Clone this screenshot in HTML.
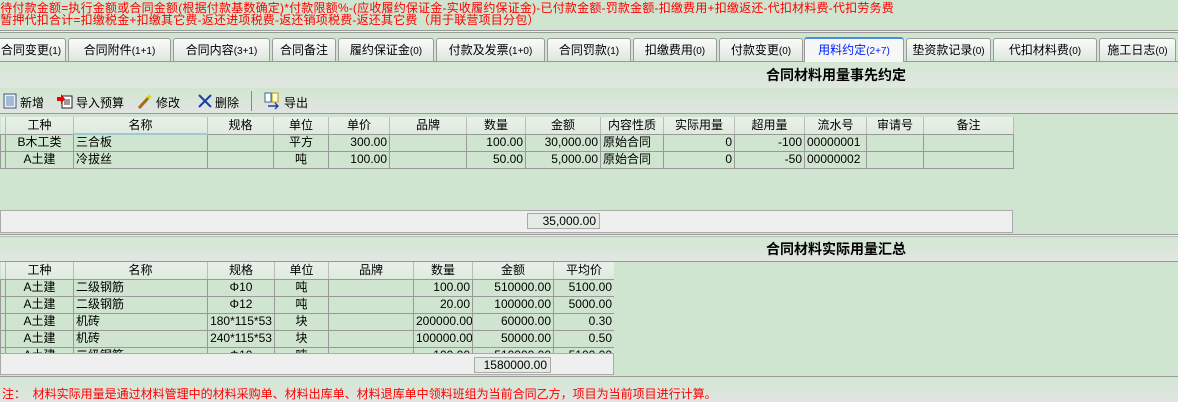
<!DOCTYPE html>
<html><head><meta charset="utf-8"><style>
*{margin:0;padding:0;box-sizing:border-box}
body{width:1178px;height:402px;overflow:hidden;background:#cfe5cf;font-family:"Liberation Sans","Noto Sans CJK SC",sans-serif;font-size:12px;color:#000;position:relative}
.a{position:absolute;white-space:nowrap}
.red{color:#f00;font-size:12px;line-height:12px}
.tab{position:absolute;top:38px;height:23px;border:1px solid #9a9a9a;border-bottom:none;border-radius:3px 3px 0 0;background:linear-gradient(#fafcfa,#dfe5df);text-align:center;line-height:22px;font-size:12px}
.tab.on{background:#f7f7f7;color:#0020ff;border-top:2px solid #4a8ee0;top:37px;height:25px}
.tab small{font-size:10px}
table{position:absolute;border-collapse:collapse;table-layout:fixed}
td{border:1px solid #999;height:17px;padding:0 2px;font-size:12px;line-height:15px;overflow:hidden;white-space:nowrap}
tr.h td{background:linear-gradient(#e8f1e8,#dfeade);border:none;border-right:1px solid #bbb;text-align:center;border-bottom:1px solid #999}
.r{text-align:right}.c{text-align:center}
.title{position:absolute;left:0;width:1178px;background:linear-gradient(#d3e7d3,#e2e6e2);font-weight:bold;font-size:14px}
.foot{position:absolute;background:#efefef;border:1px solid #aaa}
.box{position:absolute;border:1px solid #aaa;background:#e4ebe4;text-align:right;padding-right:3px;line-height:14px}
</style></head><body>
<div class="a red" style="left:-4px;top:2px;letter-spacing:0.2px">)待付款金额=执行金额或合同金额(根据付款基数确定)*付款限额%-(应收履约保证金-实收履约保证金)-已付款金额-罚款金额-扣缴费用+扣缴返还-代扣材料费-代扣劳务费</div>
<div class="a red" style="left:-4px;top:14px;letter-spacing:0.2px">)暂押代扣合计=扣缴税金+扣缴其它费-返还进项税费-返还销项税费-返还其它费（用于联营项目分包）</div>
<div class="a" style="left:0;top:30px;width:1178px;height:3px;border-top:1px solid #999;border-bottom:1px solid #999;background:#eee"></div>
<div class="a" style="left:0;top:61px;width:1178px;height:1px;background:#999"></div>
<div class="tab" style="left:-4px;width:70px">合同变更<small>(1)</small></div>
<div class="tab" style="left:68px;width:103px">合同附件<small>(1+1)</small></div>
<div class="tab" style="left:173px;width:97px">合同内容<small>(3+1)</small></div>
<div class="tab" style="left:272px;width:64px">合同备注</div>
<div class="tab" style="left:338px;width:96px">履约保证金<small>(0)</small></div>
<div class="tab" style="left:436px;width:109px">付款及发票<small>(1+0)</small></div>
<div class="tab" style="left:547px;width:84px">合同罚款<small>(1)</small></div>
<div class="tab" style="left:633px;width:84px">扣缴费用<small>(0)</small></div>
<div class="tab" style="left:719px;width:84px">付款变更<small>(0)</small></div>
<div class="tab on" style="left:804px;width:100px">用料约定<small>(2+7)</small></div>
<div class="tab" style="left:906px;width:85px">垫资款记录<small>(0)</small></div>
<div class="tab" style="left:993px;width:104px">代扣材料费<small>(0)</small></div>
<div class="tab" style="left:1099px;width:77px">施工日志<small>(0)</small></div>
<div class="title" style="top:62px;height:26px;line-height:26px;padding-left:766px">合同材料用量事先约定</div>
<div class="a" style="left:0;top:88px;width:1178px;height:26px;background:linear-gradient(#d0e6d0,#e2e4e2);border-bottom:1px solid #999"></div>
<svg class="a" style="left:3px;top:93px" width="14" height="16"><rect x="1" y="1" width="12" height="14" fill="#eef" stroke="#457"/><path d="M3 4h8M3 6h8M3 8h8M3 10h8M3 12h8" stroke="#58a"/></svg>
<div class="a" style="left:20px;top:94px">新增</div>
<svg class="a" style="left:56px;top:93px" width="18" height="16"><rect x="6" y="3" width="10" height="12" fill="#fff" stroke="#222"/><path d="M8 7h6M8 9h6M8 11h6" stroke="#333"/><path d="M1 4h4V1l4 5-4 5V8H1z" fill="#e00"/></svg>
<div class="a" style="left:76px;top:94px">导入预算</div>
<svg class="a" style="left:137px;top:93px" width="16" height="16"><path d="M2 15L13 3" stroke="#a66a20" stroke-width="3"/><path d="M12 1l1 2 2 1-2 1-1 2-1-2-2-1 2-1z" fill="#dd0"/></svg>
<div class="a" style="left:156px;top:94px">修改</div>
<svg class="a" style="left:198px;top:94px" width="14" height="14"><path d="M1 1L13 13M13 1L1 13" stroke="#1a3fa8" stroke-width="2"/></svg>
<div class="a" style="left:215px;top:94px">删除</div>
<div class="a" style="left:251px;top:91px;width:1px;height:20px;background:#888"></div>
<svg class="a" style="left:264px;top:92px" width="16" height="18"><rect x="1" y="1" width="6" height="9" fill="#fff" stroke="#468"/><rect x="8" y="1" width="6" height="9" fill="#ffd" stroke="#b90"/><path d="M4 14h10M11 11l3 3-3 3" stroke="#1a3fa8" fill="none" stroke-width="1.4"/></svg>
<div class="a" style="left:284px;top:94px">导出</div>

<table style="left:0;top:117px;width:1013px">
<colgroup><col style="width:5px"><col style="width:68px"><col style="width:134px"><col style="width:66px"><col style="width:55px"><col style="width:61px"><col style="width:77px"><col style="width:59px"><col style="width:75px"><col style="width:63px"><col style="width:71px"><col style="width:70px"><col style="width:62px"><col style="width:57px"><col style="width:90px"></colgroup>
<tr class="h"><td></td><td>工种</td><td style="border-bottom:2px solid #9cc8d8">名称</td><td>规格</td><td>单位</td><td>单价</td><td>品牌</td><td>数量</td><td>金额</td><td>内容性质</td><td>实际用量</td><td>超用量</td><td>流水号</td><td>审请号</td><td>备注</td></tr>
<tr><td></td><td class="c">B木工类</td><td>三合板</td><td></td><td class="c">平方</td><td class="r">300.00</td><td></td><td class="r">100.00</td><td class="r">30,000.00</td><td>原始合同</td><td class="r">0</td><td class="r">-100</td><td>00000001</td><td></td><td></td></tr>
<tr><td></td><td class="c">A土建</td><td>冷拔丝</td><td></td><td class="c">吨</td><td class="r">100.00</td><td></td><td class="r">50.00</td><td class="r">5,000.00</td><td>原始合同</td><td class="r">0</td><td class="r">-50</td><td>00000002</td><td></td><td></td></tr>
</table>
<div class="foot" style="left:0;top:210px;width:1013px;height:23px"></div>
<div class="box" style="left:527px;top:213px;width:73px;height:16px">35,000.00</div>
<div class="a" style="left:0;top:234px;width:1178px;height:3px;border-top:1px solid #999;border-bottom:1px solid #bbb;background:#eee"></div>
<div class="title" style="top:237px;height:25px;line-height:25px;padding-left:766px;border-bottom:1px solid #999">合同材料实际用量汇总</div>

<div class="a" style="left:0;top:262px;width:614px;height:113px;overflow:hidden">
<table style="left:0;top:0;width:614px">
<colgroup><col style="width:5px"><col style="width:68px"><col style="width:134px"><col style="width:67px"><col style="width:54px"><col style="width:85px"><col style="width:59px"><col style="width:81px"><col style="width:61px"></colgroup>
<tr class="h"><td></td><td>工种</td><td>名称</td><td>规格</td><td>单位</td><td>品牌</td><td>数量</td><td>金额</td><td>平均价</td></tr>
<tr><td></td><td class="c">A土建</td><td>二级钢筋</td><td class="c">Φ10</td><td class="c">吨</td><td></td><td class="r">100.00</td><td class="r">510000.00</td><td class="r">5100.00</td></tr>
<tr><td></td><td class="c">A土建</td><td>二级钢筋</td><td class="c">Φ12</td><td class="c">吨</td><td></td><td class="r">20.00</td><td class="r">100000.00</td><td class="r">5000.00</td></tr>
<tr><td></td><td class="c">A土建</td><td>机砖</td><td class="c">180*115*53</td><td class="c">块</td><td></td><td class="r">200000.00</td><td class="r">60000.00</td><td class="r">0.30</td></tr>
<tr><td></td><td class="c">A土建</td><td>机砖</td><td class="c">240*115*53</td><td class="c">块</td><td></td><td class="r">100000.00</td><td class="r">50000.00</td><td class="r">0.50</td></tr>
<tr><td></td><td class="c">A土建</td><td>二级钢筋</td><td class="c">Φ10</td><td class="c">吨</td><td></td><td class="r">100.00</td><td class="r">510000.00</td><td class="r">5100.00</td></tr>
</table>
<div class="foot" style="left:0;top:91px;width:614px;height:22px"></div>
<div class="box" style="left:474px;top:95px;width:77px;height:16px">1580000.00</div>
</div>
<div class="a" style="left:0;top:376px;width:1178px;height:26px;background:linear-gradient(#d3e7d3,#e0e4e0);border-top:1px solid #999"></div>
<div class="a red" style="left:2px;top:388px">注：&nbsp;&nbsp;材料实际用量是通过材料管理中的材料采购单、材料出库单、材料退库单中领料班组为当前合同乙方，项目为当前项目进行计算。</div>
</body></html>
